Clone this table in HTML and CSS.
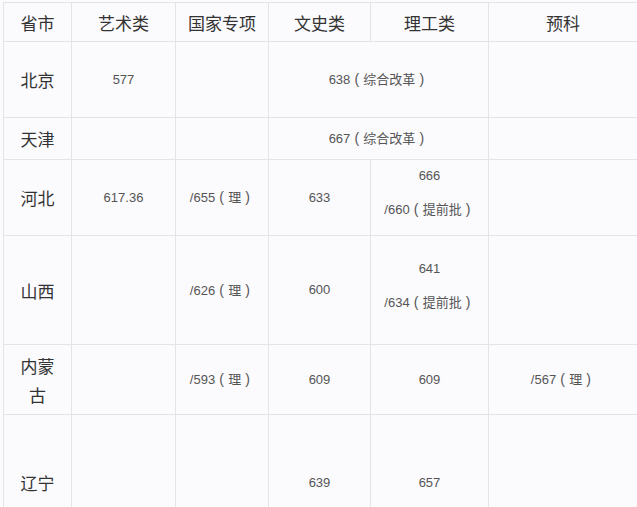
FILE: index.html
```html
<!DOCTYPE html>
<html lang="zh-CN">
<head>
<meta charset="utf-8">
<title>分数线</title>
<link rel="stylesheet" href="styles.css">
</head>
<body>
<table class="score-table">
  <colgroup>
    <col class="c1"><col class="c2"><col class="c3"><col class="c4"><col class="c5"><col class="c6">
  </colgroup>
  <thead>
    <tr class="r-head">
      <th>省市</th><th>艺术类</th><th>国家专项</th><th>文史类</th><th>理工类</th><th>预科</th>
    </tr>
  </thead>
  <tbody>
    <tr class="r-bj">
      <th>北京</th><td>577</td><td></td><td colspan="2">638<span class="pn">(</span>综合改革<span class="pn">)</span></td><td></td>
    </tr>
    <tr class="r-tj">
      <th>天津</th><td></td><td></td><td colspan="2">667<span class="pn">(</span>综合改革<span class="pn">)</span></td><td></td>
    </tr>
    <tr class="r-hb">
      <th>河北</th><td>617.36</td><td>/655<span class="pn">(</span>理<span class="pn">)</span></td><td>633</td>
      <td class="stack"><p>666</p><p>/660<span class="pn">(</span>提前批<span class="pn">)</span></p></td><td></td>
    </tr>
    <tr class="r-sx">
      <th>山西</th><td></td><td>/626<span class="pn">(</span>理<span class="pn">)</span></td><td>600</td>
      <td class="stack"><p>641</p><p>/634<span class="pn">(</span>提前批<span class="pn">)</span></p></td><td></td>
    </tr>
    <tr class="r-nm">
      <th>内蒙古</th><td></td><td>/593<span class="pn">(</span>理<span class="pn">)</span></td><td>609</td><td>609</td><td>/567<span class="pn">(</span>理<span class="pn">)</span></td>
    </tr>
    <tr class="r-ln">
      <th>辽宁</th><td></td><td></td><td>639</td><td>657</td><td></td>
    </tr>
  </tbody>
</table>
</body>
</html>
```

FILE: styles.css
```css
html, body {
  margin: 0;
  padding: 0;
  background: #fbfafd;
}

body {
  padding: 2px 0 0 3px;
  font-family: "Liberation Sans", "Noto Sans CJK SC", sans-serif;
}

.score-table {
  border-collapse: collapse;
  table-layout: fixed;
  width: 634px;
}

.c1 { width: 68px; }
.c2 { width: 104px; }
.c3 { width: 93px; }
.c4 { width: 102px; }
.c5 { width: 118px; }
.c6 { width: 149px; }

.score-table th,
.score-table td {
  border: 1px solid #e4e3e8;
  padding: 0 9px;
  text-align: center;
  vertical-align: middle;
}

.score-table th {
  font-family: "Noto Sans CJK SC", sans-serif;
  font-weight: normal;
  font-size: 17px;
  line-height: 29px;
  color: #333;
}

.score-table td {
  font-size: 13px;
  line-height: 20px;
  color: #555;
  white-space: nowrap;
}

.pn {
  display: inline-block;
  width: 13px;
  text-align: center;
  font-size: 14px;
}

.score-table td.stack {
  padding-bottom: 9px;
}

.stack p {
  margin: 0;
}

.stack p + p {
  margin-top: 13px;
}

.r-head { height: 39px; }
.r-bj { height: 76px; }
.r-tj { height: 42px; }
.r-hb { height: 76px; }
.r-sx { height: 109px; }
.r-nm { height: 70px; }
.r-ln { height: 136px; }
```
